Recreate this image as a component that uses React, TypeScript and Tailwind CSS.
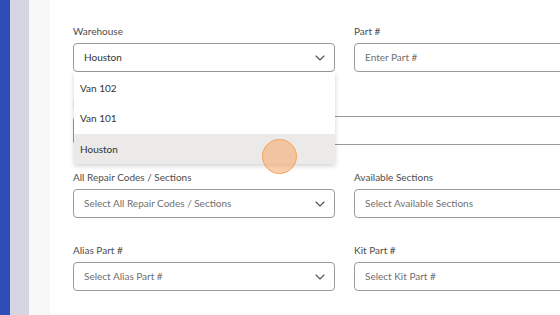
import React from "react";

const Chevron = () => (
  <svg width="10" height="6" viewBox="0 0 10 6" className="shrink-0">
    <path d="M1 1 L5 5 L9 1" fill="none" stroke="#555" strokeWidth="1.1" strokeLinecap="round" strokeLinejoin="round" />
  </svg>
);

const Label = ({ children, className = "" }: { children: React.ReactNode; className?: string }) => (
  <div className={`text-[10px] leading-[14px] text-[#4d4d4d] mb-[5px] ${className}`}>{children}</div>
);

const SelectBox = ({ text, dark = false, chevron = true }: { text: string; dark?: boolean; chevron?: boolean }) => (
  <div className="h-[29px] border border-[#9c9c9c] rounded-[4px] flex items-center justify-between pl-[10px] pr-[9px] bg-white">
    <span className={`text-[10px] ${dark ? "text-[#333]" : "text-[#6f6f6f]"}`}>{text}</span>
    {chevron && <Chevron />}
  </div>
);

export default function App() {
  return (
    <div className="w-[560px] h-[315px] overflow-hidden flex bg-white" style={{ fontFamily: "Lato, 'Open Sans', sans-serif" }}>
      <div className="w-[10px] bg-[#2f4db7] shrink-0" />
      <div className="w-[19px] bg-[#d6d6e2] shrink-0" />
      <div className="w-[21px] bg-[#f8f8f9] shrink-0" />
      <div className="relative flex-1 pl-[23px] pt-[24px]">
        <div className="grid grid-cols-[262px_262px] gap-x-[19px] gap-y-[25px] w-max">
          <div className="relative z-10">
            <Label>Warehouse</Label>
            <SelectBox text="Houston" dark />
            <div className="absolute top-full left-[1px] right-0 bg-white shadow-[0_2px_5px_rgba(0,0,0,0.18)] text-[10px] text-[#333]">
              <div className="h-[31px] flex items-center pl-[6px] pt-[2px]">Van 102</div>
              <div className="h-[31px] flex items-center pl-[6px]">Van 101</div>
              <div className="h-[30px] flex items-center pl-[6px] bg-[#ebeae9]">Houston</div>
            </div>
          </div>
          <div>
            <Label>Part #</Label>
            <SelectBox text="Enter Part #" chevron={false} />
          </div>
          <div className="col-span-2">
            <Label className="text-[#e39a55]">Description</Label>
            <div className="h-[29px] border border-[#9c9c9c] rounded-[4px] bg-white" />
          </div>
          <div>
            <Label>All Repair Codes / Sections</Label>
            <SelectBox text="Select All Repair Codes / Sections" />
          </div>
          <div>
            <Label>Available Sections</Label>
            <SelectBox text="Select Available Sections" />
          </div>
          <div>
            <Label>Alias Part #</Label>
            <SelectBox text="Select Alias Part #" />
          </div>
          <div>
            <Label>Kit Part #</Label>
            <SelectBox text="Select Kit Part #" />
          </div>
        </div>
        <div className="absolute left-[212px] top-[139px] w-[35px] h-[35px] rounded-full bg-[rgba(247,160,85,0.5)] border-[1.5px] border-[#f5a35f] z-20" />
      </div>
    </div>
  );
}
